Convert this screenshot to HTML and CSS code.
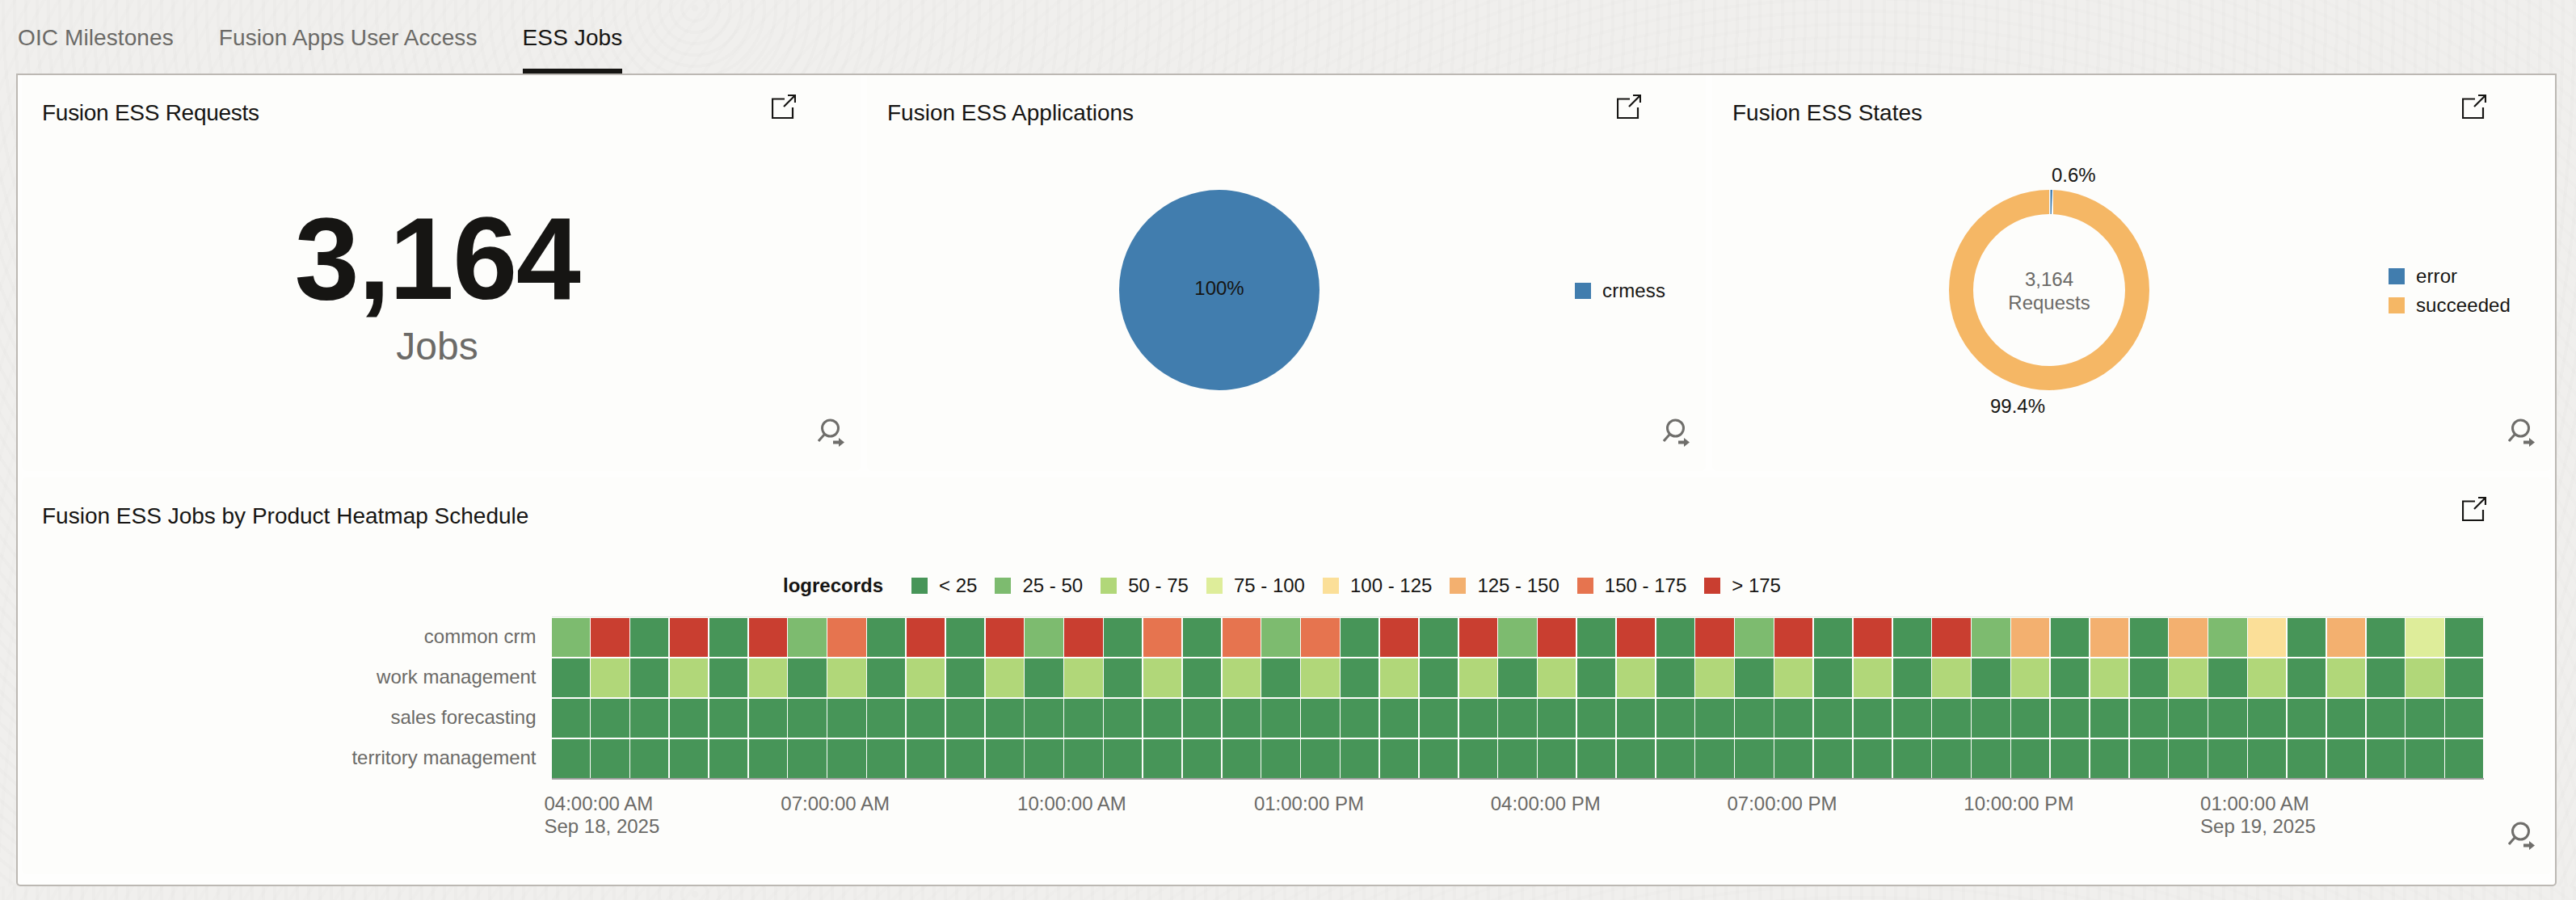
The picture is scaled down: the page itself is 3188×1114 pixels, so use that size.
FILE: index.html
```html
<!DOCTYPE html>
<html lang="en">
<head>
    <meta charset="UTF-8">
    <title>ESS Jobs</title>
    <link rel="stylesheet" href="styles.css">
</head>
<body>

<nav class="tabs">
    <a class="tab">OIC Milestones</a>
    <a class="tab">Fusion Apps User Access</a>
    <a class="tab tab-active">ESS Jobs</a>
</nav>

<main class="board">
    <section class="tile">
        <header class="tile-head">
            <h2 class="tile-title tile-title-tight">Fusion ESS Requests</h2>
            <svg class="icon-open" viewBox="0 0 30 30"><path d="M16 5.5H1V29H26V16M15 15L29 1M20 1H29V10"/></svg>
        </header>
        <div class="metric">
            <div class="metric-value">3,164</div>
            <div class="metric-unit">Jobs</div>
        </div>
        <svg class="icon-search" viewBox="0 0 34 36"><circle cx="15.5" cy="12" r="10"/><path d="M8 20L1 28"/><path class="arrow" d="M19 27.5H26V24L33 29.5L26 35V31.5H19Z"/></svg>
    </section>

    <section class="tile">
        <header class="tile-head">
            <h2 class="tile-title">Fusion ESS Applications</h2>
            <svg class="icon-open" viewBox="0 0 30 30"><path d="M16 5.5H1V29H26V16M15 15L29 1M20 1H29V10"/></svg>
        </header>
        <div class="chart">
            <div class="plot">
                <svg class="pie" viewBox="0 0 248 320">
                    <circle class="fill-blue" cx="124" cy="160" r="124"/>
                    <text class="label-dark" x="124" y="166" text-anchor="middle">100%</text>
                </svg>
            </div>
            <ul class="legend">
                <li class="legend-item"><span class="swatch fill-blue-bg"></span>crmess</li>
            </ul>
        </div>
        <svg class="icon-search" viewBox="0 0 34 36"><circle cx="15.5" cy="12" r="10"/><path d="M8 20L1 28"/><path class="arrow" d="M19 27.5H26V24L33 29.5L26 35V31.5H19Z"/></svg>
    </section>

    <section class="tile">
        <header class="tile-head">
            <h2 class="tile-title">Fusion ESS States</h2>
            <svg class="icon-open" viewBox="0 0 30 30"><path d="M16 5.5H1V29H26V16M15 15L29 1M20 1H29V10"/></svg>
        </header>
        <div class="chart">
            <div class="plot">
                <svg class="donut" viewBox="0 0 400 320">
                    <circle class="ring" cx="200" cy="160" r="109"/>
                    <rect class="ring-gap" x="200" y="35" width="5" height="32"/>
                    <polygon class="fill-blue" points="201.5,36 204,36 202.8,66 201.5,66"/>
                    <text class="label-dark" x="203" y="26">0.6%</text>
                    <text class="label-dark" x="127" y="312">99.4%</text>
                    <text class="label-gray" x="200" y="155" text-anchor="middle">3,164</text>
                    <text class="label-gray" x="200" y="184" text-anchor="middle">Requests</text>
                </svg>
            </div>
            <ul class="legend">
                <li class="legend-item"><span class="swatch fill-blue-bg"></span>error</li>
                <li class="legend-item"><span class="swatch fill-amber-bg"></span>succeeded</li>
            </ul>
        </div>
        <svg class="icon-search" viewBox="0 0 34 36"><circle cx="15.5" cy="12" r="10"/><path d="M8 20L1 28"/><path class="arrow" d="M19 27.5H26V24L33 29.5L26 35V31.5H19Z"/></svg>
    </section>

    <section class="tile tile-wide">
        <header class="tile-head">
            <h2 class="tile-title">Fusion ESS Jobs by Product Heatmap Schedule</h2>
            <svg class="icon-open" viewBox="0 0 30 30"><path d="M16 5.5H1V29H26V16M15 15L29 1M20 1H29V10"/></svg>
        </header>

        <div class="heat-legend">
            <strong class="heat-legend-name">logrecords</strong>
            <span class="heat-key"><span class="swatch level-1"></span>&lt; 25</span>
            <span class="heat-key"><span class="swatch level-2"></span>25 - 50</span>
            <span class="heat-key"><span class="swatch level-3"></span>50 - 75</span>
            <span class="heat-key"><span class="swatch level-4"></span>75 - 100</span>
            <span class="heat-key"><span class="swatch level-5"></span>100 - 125</span>
            <span class="heat-key"><span class="swatch level-6"></span>125 - 150</span>
            <span class="heat-key"><span class="swatch level-7"></span>150 - 175</span>
            <span class="heat-key"><span class="swatch level-8"></span>&gt; 175</span>
        </div>

        <div class="heat">
            <div class="heat-rows">
                <div class="heat-row">common crm</div>
                <div class="heat-row">work management</div>
                <div class="heat-row">sales forecasting</div>
                <div class="heat-row">territory management</div>
            </div>
            <div class="heat-grid" id="heat-grid"></div>
        </div>

        <div class="heat-axis">
            <div class="tick">04:00:00 AM<br>Sep 18, 2025</div>
            <div class="tick">07:00:00 AM</div>
            <div class="tick">10:00:00 AM</div>
            <div class="tick">01:00:00 PM</div>
            <div class="tick">04:00:00 PM</div>
            <div class="tick">07:00:00 PM</div>
            <div class="tick">10:00:00 PM</div>
            <div class="tick">01:00:00 AM<br>Sep 19, 2025</div>
        </div>
        <svg class="icon-search" viewBox="0 0 34 36"><circle cx="15.5" cy="12" r="10"/><path d="M8 20L1 28"/><path class="arrow" d="M19 27.5H26V24L33 29.5L26 35V31.5H19Z"/></svg>
    </section>
</main>

<script>
    // one digit per half hour, digit = legend level
    const heatRows = [
        '2818182' + '7181828' + '1717271' + '8182818' + '1828181' + '8261616' + '2516141',
        '1313131' + '3131313' + '1313131' + '3131313' + '1313131' + '3131313' + '1313131',
        '1'.repeat(49),
        '1'.repeat(49)
    ];

    const heatGrid = document.getElementById('heat-grid');
    heatRows.forEach(row => {
        row.split('').forEach(level => {
            const cell = document.createElement('div');
            cell.className = `heat-cell level-${level}`;
            heatGrid.appendChild(cell);
        });
    });
</script>

</body>
</html>
```

FILE: styles.css
```css
body {
    font-family: "Liberation Sans", Arial, sans-serif;
    margin: 0;
    color: #161513;
    background-color: #f0efed;
    background-image:
        repeating-radial-gradient(circle at 860px 10px, rgba(0, 0, 0, 0.01) 0 4px, transparent 4px 14px),
        repeating-radial-gradient(circle at 2300px 1200px, rgba(0, 0, 0, 0.008) 0 4px, transparent 4px 16px);
}

/* tabs */
.tabs {
    display: flex;
    gap: 56px;
    padding-left: 22px;
}

.tab {
    font-size: 28px;
    line-height: 32px;
    letter-spacing: 0.1px;
    padding: 31px 0 22px;
    border-bottom: 6px solid transparent;
    color: #6b6a67;
}

.tab-active {
    color: #161513;
    border-bottom-color: #161513;
}

/* board and tiles */
.board {
    display: grid;
    grid-template-columns: repeat(3, 1fr);
    grid-template-rows: 490px 491px;
    gap: 8px;
    box-sizing: border-box;
    width: 3144px;
    margin-left: 20px;
    padding: 0 5px 13px;
    background: #fefefd;
    border: 2px solid #bcb8b3;
    border-radius: 0 0 5px 5px;
}

.tile {
    position: relative;
    background: #fdfdfb;
    border-radius: 0 0 6px 6px;
    padding: 24px 80px 0 25px;
}

.tile-wide {
    grid-column: 1 / -1;
    border-radius: 6px;
}

.tile-head {
    display: flex;
    justify-content: space-between;
    align-items: flex-start;
}

.tile-title {
    margin: 7px 0 0;
    font-size: 28px;
    line-height: 32px;
    font-weight: normal;
}

.tile-title-tight {
    letter-spacing: -0.27px;
}

.tile-wide .tile-title {
    margin-top: 8px;
}

.icon-open {
    width: 30px;
    height: 30px;
    fill: none;
    stroke: #161513;
    stroke-width: 2.2;
}

.icon-search {
    position: absolute;
    right: 19px;
    bottom: 29px;
    width: 34px;
    height: 36px;
    fill: none;
    stroke: #6f6e6b;
    stroke-width: 3;
}

.icon-search .arrow {
    fill: #6f6e6b;
    stroke: none;
}

/* big number */
.metric {
    display: flex;
    flex-direction: column;
    align-items: center;
    margin: 100px -80px 0 -25px;
    padding-right: 10px;
}

.metric-value {
    font-size: 144px;
    font-weight: bold;
    line-height: 130px;
    letter-spacing: -1.5px;
}

.metric-unit {
    font-size: 48px;
    line-height: 56px;
    margin-top: 15px;
    color: #6b6a67;
}

/* pie + legend */
.chart {
    display: flex;
    align-items: center;
    height: 320px;
    margin: 43px -30px 0 -25px;
}

.plot {
    flex: 1;
    display: flex;
    justify-content: center;
}

.pie {
    width: 248px;
    height: 320px;
}

.donut {
    width: 400px;
    height: 320px;
}

.legend {
    list-style: none;
    margin: 2px 0 0 4px;
    padding: 0;
    font-size: 24px;
    letter-spacing: 0.1px;
}

.legend-item {
    display: flex;
    align-items: center;
    gap: 14px;
    height: 36px;
}

.swatch {
    display: inline-block;
    width: 20px;
    height: 20px;
}

.fill-blue {
    fill: #417dae;
}

.fill-blue-bg {
    background: #417dae;
}

.fill-amber-bg {
    background: #f5b765;
}

.ring {
    fill: none;
    stroke: #f5b765;
    stroke-width: 30;
}

.ring-gap {
    fill: #fdfdfb;
}

.label-dark,
.label-gray {
    font-size: 24px;
}

.label-dark {
    fill: #161513;
}

.label-gray {
    fill: #6b6a67;
}

/* heatmap */
.heat-legend {
    display: flex;
    justify-content: center;
    align-items: center;
    gap: 22px;
    height: 32px;
    margin: 54px -80px 0 -25px;
    padding-right: 11px;
    font-size: 24px;
}

.heat-legend-name {
    margin-right: 13px;
}

.heat-key {
    display: flex;
    align-items: center;
    gap: 14px;
}

.heat {
    display: flex;
    gap: 19px;
    margin: 22px 0 0 -25px;
}

.heat-rows {
    width: 636.5px;
    color: #6b6a67;
    font-size: 24px;
    text-align: right;
}

.heat-row {
    height: 50px;
    line-height: 50px;
}

.heat-grid {
    display: grid;
    grid-template-columns: repeat(49, 1fr);
    grid-auto-rows: 48px;
    gap: 2px 1.5px;
    width: 2391px;
    height: 202px;
    box-sizing: border-box;
    padding-top: 1px;
    background: #fdfdfb;
    border-top: 1px solid #dfe6e0;
    border-bottom: 2px solid #9e9e9e;
}

.level-1 { background: #479558; }
.level-2 { background: #7dbb6f; }
.level-3 { background: #b1d779; }
.level-4 { background: #deed9a; }
.level-5 { background: #fbdf98; }
.level-6 { background: #f3b06f; }
.level-7 { background: #e6744f; }
.level-8 { background: #c93e30; }

.heat-axis {
    display: flex;
    margin: 16px 0 0 621.5px;
    color: #6b6a67;
    font-size: 24px;
    line-height: 28px;
}

.tick {
    width: 292.8px;
    flex: none;
}
```
